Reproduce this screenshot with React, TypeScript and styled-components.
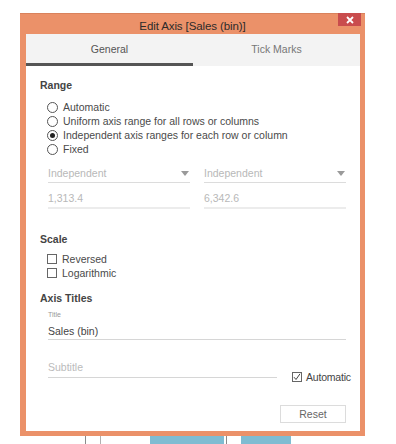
import React from "react";
import styled, { createGlobalStyle } from "styled-components";

const Global = createGlobalStyle`
  html, body { margin: 0; padding: 0; background: #ffffff; }
  body { font-family: "Liberation Sans", Arial, sans-serif; }
  * { box-sizing: border-box; }
`;

const Page = styled.div`
  width: 396px;
  height: 444px;
  padding: 13px 0 0 20px;
  overflow: hidden;
`;

const Window = styled.div`
  width: 345px;
  height: 423px;
  background: #eb9169;
  border-top: 1px solid #d9825c;
  display: flex;
  flex-direction: column;
`;

const TitleBar = styled.div`
  height: 20px;
  display: grid;
  grid-template-columns: 1fr auto 1fr;
  align-items: start;
`;

const Title = styled.div`
  grid-column: 2;
  font-size: 11.5px;
  line-height: 20px;
  padding-top: 2px;
  color: #2b2b2b;
  letter-spacing: -0.1px;
`;

const Close = styled.div`
  grid-column: 3;
  justify-self: end;
  width: 23px;
  height: 13px;
  margin-right: 4px;
  margin-top: -1px;
  background: #c94c4d;
  display: flex;
  align-items: center;
  justify-content: center;
`;

const Body = styled.div`
  flex: 1;
  margin: 0 5px 5px 6px;
  background: #ffffff;
  display: flex;
  flex-direction: column;
`;

const Tabs = styled.div`
  height: 32px;
  background: #f3f3f3;
  display: grid;
  grid-template-columns: 1fr 1fr;
`;

const Tab = styled.div<{ $active?: boolean }>`
  display: flex;
  align-items: center;
  justify-content: center;
  padding-top: 1px;
  font-size: 10.5px;
  color: ${(p) => (p.$active ? "#555" : "#777")};
  border-bottom: 3px solid ${(p) => (p.$active ? "#555" : "transparent")};
`;

const Content = styled.div`
  padding: 0 14px;
  display: flex;
  flex-direction: column;
`;

const Heading = styled.div<{ $mt: number }>`
  margin-top: ${(p) => p.$mt}px;
  font-size: 10.5px;
  line-height: 14px;
  font-weight: 700;
  color: #444;
`;

const OptionList = styled.div<{ $mt: number }>`
  margin-top: ${(p) => p.$mt}px;
  padding-left: 7px;
  display: flex;
  flex-direction: column;
`;

const Option = styled.div`
  height: 14px;
  display: flex;
  align-items: center;
  gap: 5px;
  font-size: 10.5px;
  color: #4a4a4a;
`;

const Radio = styled.span<{ $on?: boolean }>`
  width: 11px;
  height: 11px;
  border-radius: 50%;
  border: 1px solid #555;
  display: flex;
  align-items: center;
  justify-content: center;
  flex: none;
  &::after {
    content: "";
    width: 5px;
    height: 5px;
    border-radius: 50%;
    background: ${(p) => (p.$on ? "#222" : "transparent")};
  }
`;

const Box = styled.span`
  width: 10px;
  height: 10px;
  border: 1px solid #666;
  flex: none;
  display: flex;
  align-items: center;
  justify-content: center;
`;

const FieldRow = styled.div<{ $mt: number }>`
  margin-top: ${(p) => p.$mt}px;
  padding-left: 8px;
  display: grid;
  grid-template-columns: 142px 142px;
  column-gap: 14px;
`;

const Select = styled.div`
  height: 17px;
  padding-bottom: 2px;
  border-bottom: 1px solid #dcdcdc;
  display: flex;
  align-items: center;
  justify-content: space-between;
  font-size: 10.5px;
  line-height: 14px;
  color: #b8b8b8;
`;

const Caret = styled.span`
  width: 0;
  height: 0;
  border-left: 4px solid transparent;
  border-right: 4px solid transparent;
  border-top: 5px solid #9a9a9a;
  margin-right: 1px;
`;

const Value = styled.div`
  height: 18px;
  padding-bottom: 2px;
  border-bottom: 2px solid #ececec;
  font-size: 10.5px;
  line-height: 14px;
  color: #b8b8b8;
`;

const Label = styled.div<{ $mt: number }>`
  margin-top: ${(p) => p.$mt}px;
  padding-left: 8px;
  font-size: 7px;
  line-height: 10px;
  color: #999;
`;

const TextField = styled.div<{ $mt: number; $muted?: boolean }>`
  margin-top: ${(p) => p.$mt}px;
  height: 16px;
  padding-bottom: 2px;
  border-bottom: 1px solid #d6d6d6;
  font-size: 10.5px;
  line-height: 14px;
  color: ${(p) => (p.$muted ? "#bbbbbb" : "#444")};
`;

const TitleField = styled.div`
  padding-left: 8px;
  display: flex;
  flex-direction: column;
`;

const SubtitleRow = styled.div`
  margin-top: 20px;
  padding-left: 8px;
  display: flex;
  align-items: flex-start;
  gap: 15px;
`;

const SubtitleField = styled(TextField)`
  flex: none;
  width: 229px;
  height: 18px;
  padding-bottom: 3px;
`;

const AutoCheck = styled.div`
  flex: none;
  margin-top: 10px;
  display: flex;
  align-items: center;
  gap: 4px;
  font-size: 10.5px;
  line-height: 14px;
  letter-spacing: -0.2px;
  color: #444;
`;

const Footer = styled.div`
  margin-top: 21px;
  display: flex;
  justify-content: flex-end;
`;

const Button = styled.div`
  width: 66px;
  height: 18px;
  border: 1px solid #dcdcdc;
  display: flex;
  align-items: center;
  justify-content: center;
  font-size: 10.5px;
  color: #666;
  background: #fff;
`;

const Under = styled.div`
  height: 8px;
  display: flex;
  align-items: stretch;
  margin-left: -20px;
`;

const Strip = styled.span<{ $w: number; $c: string; $ml: number }>`
  width: ${(p) => p.$w}px;
  margin-left: ${(p) => p.$ml}px;
  background: ${(p) => p.$c};
`;

export default function App() {
  return (
    <Page>
      <Global />
      <Window>
        <TitleBar>
          <Title>Edit Axis [Sales (bin)]</Title>
          <Close>
            <svg width="8" height="8" viewBox="0 0 8 8">
              <path d="M1 1 L7 7 M7 1 L1 7" stroke="#fff" strokeWidth="1.8" />
            </svg>
          </Close>
        </TitleBar>
        <Body>
          <Tabs>
            <Tab $active>General</Tab>
            <Tab>Tick Marks</Tab>
          </Tabs>
          <Content>
            <Heading $mt={12}>Range</Heading>
            <OptionList $mt={8}>
              <Option><Radio />Automatic</Option>
              <Option><Radio />Uniform axis range for all rows or columns</Option>
              <Option><Radio $on />Independent axis ranges for each row or column</Option>
              <Option><Radio />Fixed</Option>
            </OptionList>
            <FieldRow $mt={10}>
              <Select>Independent<Caret /></Select>
              <Select>Independent<Caret /></Select>
            </FieldRow>
            <FieldRow $mt={8}>
              <Value>1,313.4</Value>
              <Value>6,342.6</Value>
            </FieldRow>
            <Heading $mt={23}>Scale</Heading>
            <OptionList $mt={6}>
              <Option><Box />Reversed</Option>
              <Option><Box />Logarithmic</Option>
            </OptionList>
            <Heading $mt={11}>Axis Titles</Heading>
            <Label $mt={5}>Title</Label>
            <TitleField>
              <TextField $mt={4}>Sales (bin)</TextField>
            </TitleField>
            <SubtitleRow>
              <SubtitleField $mt={0} $muted>Subtitle</SubtitleField>
              <AutoCheck>
                <Box>
                  <svg width="8" height="8" viewBox="0 0 8 8">
                    <path d="M1 4.2 L3 6.5 L7 0.8" stroke="#444" strokeWidth="1" fill="none" />
                  </svg>
                </Box>
                Automatic
              </AutoCheck>
            </SubtitleRow>
            <Footer>
              <Button>Reset</Button>
            </Footer>
          </Content>
        </Body>
      </Window>
      <Under>
        <Strip $ml={85} $w={1} $c="#8a8a8a" />
        <Strip $ml={14} $w={1} $c="#b0b0b0" />
        <Strip $ml={49} $w={74} $c="#7fbcd2" />
        <Strip $ml={2} $w={1} $c="#8a8a8a" />
        <Strip $ml={14} $w={50} $c="#7fbcd2" />
      </Under>
    </Page>
  );
}
